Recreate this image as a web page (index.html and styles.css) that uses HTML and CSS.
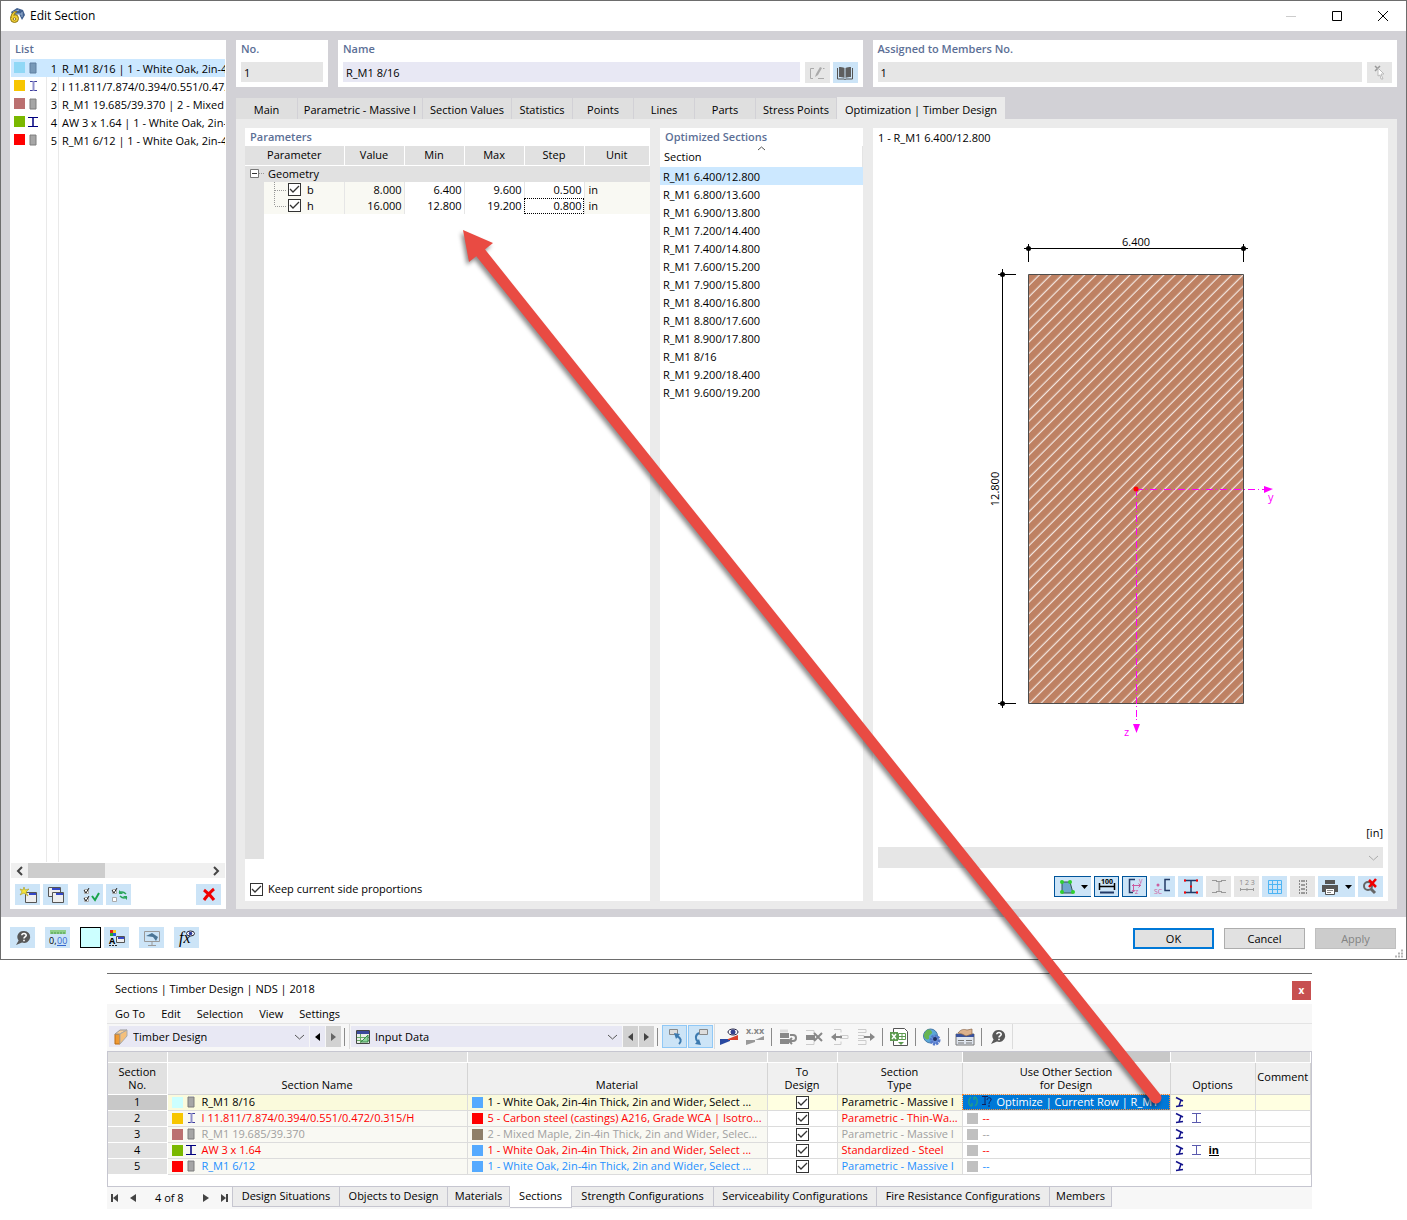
FILE: index.html
```html
<!DOCTYPE html>
<html lang="en">
<head>
<meta charset="utf-8">
<title>Edit Section</title>
<link rel="stylesheet" href="styles.css">
</head>
<body>
<svg class="defs" aria-hidden="true">
  <symbol id="massive" viewBox="0 0 8 12"><path d="M1 1h6v10H1z" fill="#a6a6a6" stroke="#7d7d7d"/><path d="M2 .5h5" stroke="#c4c4c4"/></symbol>
  <symbol id="massive-sel" viewBox="0 0 8 12"><path d="M1 1h6v10H1z" fill="#7899b8" stroke="#5f7fa0"/></symbol>
  <symbol id="ibeam" viewBox="0 0 10 12"><path d="M0 1.500h10M0 10.500h10" fill="none" stroke="#00007f"/><path d="M5 1v10" stroke="#00007f" stroke-width="1.500"/></symbol>
  <symbol id="ibeam-soft" viewBox="0 0 10 12"><path d="M2 1.500h7M2 10.500h7" stroke="#3c3c9c" fill="none"/><path d="M5.500 1v10" stroke="#9090cc" stroke-width="2"/></symbol>
  <symbol id="ibeam-thin" viewBox="0 0 10 12"><path d="M0 1.500h9M0 10.500h9M4.500 2v8" stroke="#5a5aae" fill="none"/></symbol>
  <symbol id="support" viewBox="0 0 10 12"><path d="m1 1.500 7 3.500M6 4 4 10M1 10.500l7-1" stroke="#14148c" stroke-width="1.500" fill="none"/></symbol>
  <symbol id="help" viewBox="0 0 16 16"><path d="M9 1a6 6 0 1 1-2 11.600L1 15l2.600-4.400A6 6 0 0 1 9 1z" fill="#585858"/><path d="M6.800 5.300C7 2.800 11.500 3 11.200 5.400 11 7 9 6.800 9 8.600M9 9.800v1.400" stroke="#fff" stroke-width="1.600" fill="none"/></symbol>
</svg>

<div class="screen">
  <section class="dialog" aria-label="Edit Section">
    <header class="titlebar">
      <svg width="16" height="16" viewBox="0 0 16 16"><path d="M2 4 8 0l6 2 2 5-3 5-3-6-6 2z" fill="#41608f"/><path d="m4 4 6-2M6 6l7 0M13 4l0 5" stroke="#9db4d4"/><circle cx="5.500" cy="10.500" r="4" fill="#f3cf32" stroke="#8d7718"/><path d="M2 10C2 6 4 3 8 3.500 6 5 5 6 5 8" fill="#f3cf32" stroke="#8d7718"/><circle cx="5.500" cy="11" r="1.300" fill="#fff" stroke="#8d7718"/></svg>
      <h1>Edit Section</h1>
      <div class="window-controls">
        <button aria-label="Minimize" disabled><svg width="12" height="12"><path d="M1 6.500h10" stroke="#ccc"/></svg></button>
        <button aria-label="Maximize"><svg width="12" height="12"><path d="M1.500 1.500h9v9h-9z" fill="none" stroke="#000"/></svg></button>
        <button aria-label="Close"><svg width="12" height="12"><path d="m1 1 10 10M11 1 1 11" stroke="#000"/></svg></button>
      </div>
    </header>

    <div class="workspace">
      <section class="panel list-panel">
        <h2>List</h2>
        <ul class="section-list">
          <li class="selected"><i class="swatch sky"></i><svg width="8" height="12"><use href="#massive-sel"/></svg><b>1</b><span>R_M1 8/16 | 1 - White Oak, 2in-4</span></li>
          <li><i class="swatch amber"></i><svg width="10" height="12"><use href="#ibeam-soft"/></svg><b>2</b><span>I 11.811/7.874/0.394/0.551/0.472</span></li>
          <li><i class="swatch rose"></i><svg width="8" height="12"><use href="#massive"/></svg><b>3</b><span>R_M1 19.685/39.370 | 2 - Mixed M</span></li>
          <li><i class="swatch green"></i><svg width="10" height="12"><use href="#ibeam"/></svg><b>4</b><span>AW 3 x 1.64 | 1 - White Oak, 2in-</span></li>
          <li><i class="swatch red"></i><svg width="8" height="12"><use href="#massive"/></svg><b>5</b><span>R_M1 6/12 | 1 - White Oak, 2in-4</span></li>
        </ul>
        <div class="scrollbar">
          <button aria-label="Scroll left"><svg width="7" height="8"><path d="M6 0 2 4l4 4" fill="none" stroke="#444" stroke-width="2"/></svg></button>
          <i class="thumb"></i>
          <button aria-label="Scroll right"><svg width="7" height="8"><path d="m1 0 4 4-4 4" fill="none" stroke="#444" stroke-width="2"/></svg></button>
        </div>
        <div class="icon-row list-tools">
          <button class="tool" aria-label="New"><svg width="18" height="16"><path d="M6.500 5.500h11v10h-11z" fill="#eee" stroke="#555"/><path d="M10 6h7v2h-7z" fill="#3448c8"/><path d="m5 0 1 3 4-1-3 3 2 4-4-3-4 2 2-3-2-3 3 1z" fill="#f5e43c" stroke="#a89a20" stroke-width=".6"/></svg></button>
          <button class="tool" aria-label="Copy"><svg width="18" height="16"><path d="M1.500.500h12v9h-12z" fill="#eee" stroke="#555"/><path d="M5 1h8v2H5z" fill="#3448c8"/><path d="M5.500 5.500h11v10h-11z" fill="#eee" stroke="#555"/><path d="M9 6h7v2H9z" fill="#3448c8"/></svg></button>
          <button class="tool gap-before" aria-label="Select all"><svg width="18" height="16"><path d="M2.500 2.500h4v4h-4zM2.500 10.500h4v4h-4z" fill="#fff" stroke="#aaa"/><path d="m2 3 2 3 3-5M2 11l2 3 3-5" stroke="#222" fill="none"/><path d="m10 9 3 4 4-7" fill="none" stroke="#19a34a" stroke-width="2"/></svg></button>
          <button class="tool" aria-label="Invert selection"><svg width="18" height="16"><path d="M2.500 2.500h4v4h-4zM2.500 10.500h4v4h-4z" fill="#fff" stroke="#aaa"/><path d="m2 3 2 3 3-5" stroke="#222" fill="none"/><path d="M9 6c3-2 5-1 7 1M17 10c-3 2-5 1-7-1" fill="none" stroke="#2aa55a" stroke-width="1.500"/><path d="M9 3v4h4zM17 13V9h-4z" fill="#2aa55a"/></svg></button>
          <button class="tool push" aria-label="Delete"><svg width="14" height="14"><path d="M2 2c4 3 7 6 10 10M12 1C8 4 5 8 2 12" stroke="#f00000" stroke-width="3" fill="none"/></svg></button>
        </div>
      </section>

      <div class="details">
        <div class="head-row">
          <section class="panel field-panel">
            <h2><label for="no">No.</label></h2>
            <input id="no" class="field" value="1" readonly>
          </section>
          <section class="panel field-panel">
            <h2><label for="name">Name</label></h2>
            <div class="field-line">
              <input id="name" class="field editable" value="R_M1 8/16">
              <button class="tool off" aria-label="Edit name" disabled><svg width="16" height="14"><path d="M5 2.500H1.500v10H4M9 12.500h6M14 2.500h1.500" fill="none" stroke="#aaa"/><path d="m6 11 1-3 4-7 2 1-4 7z" fill="#aaa"/></svg></button>
              <button class="tool" aria-label="Library"><svg width="16" height="14"><path d="M2 1c2 0 4 0 5.500 1v10C6 11 4 11 2 11zM14 1c-2 0-4 0-5.500 1v10c1.500-1 3.500-1 5.500-1z" fill="#5e5e5e"/><path d="M.5 2v11H7l1 .5 1-.5h6.500V2" fill="none" stroke="#555"/></svg></button>
            </div>
          </section>
          <section class="panel field-panel">
            <h2><label for="assigned">Assigned to Members No.</label></h2>
            <div class="field-line">
              <input id="assigned" class="field" value="1" readonly>
              <button class="tool off" aria-label="Pick members" disabled><svg width="14" height="18"><path d="m2 2 5 5M7 2 2 7" stroke="#999" stroke-width="1.500"/><path d="m5 4 6 6-3 0 2 5-2 0-1-4-2 1z" fill="#fff" stroke="#bbb"/></svg></button>
            </div>
          </section>
        </div>

        <nav class="tabs" aria-label="Section pages">
          <button class="w1">Main</button><button class="w2">Parametric - Massive I</button><button class="w3">Section Values</button><button>Statistics</button><button>Points</button><button>Lines</button><button>Parts</button><button class="w4">Stress Points</button><button class="w5 active">Optimization | Timber Design</button>
        </nav>

        <div class="page">
          <section class="panel params">
            <h2>Parameters</h2>
            <div class="param-area">
              <table class="param-table">
                <colgroup><col class="c-gutter"><col class="c-name"><col class="c-num"><col class="c-num"><col class="c-num"><col class="c-num"><col></colgroup>
                <thead><tr><th colspan="2">Parameter</th><th>Value</th><th>Min</th><th>Max</th><th>Step</th><th>Unit</th></tr></thead>
                <tbody>
                  <tr class="group"><td><svg width="17" height="16"><path d="M5.500 3.500h8v8h-8z" fill="#fff" stroke="#777"/><path d="M7 7.500h5" stroke="#333"/><path d="M14 7.500h5" stroke="#999" stroke-dasharray="1 1"/></svg></td><td colspan="6">Geometry</td></tr>
                  <tr><td></td><td class="leaf"><label><svg width="14" height="16"><path d="M.5 0v16M1 8.500h12" stroke="#999" stroke-dasharray="1 1"/></svg><input type="checkbox" checked>b</label></td><td class="tint">8.000</td><td>6.400</td><td>9.600</td><td>0.500</td><td class="unit">in</td></tr>
                  <tr><td></td><td class="leaf"><label><svg width="14" height="16"><path d="M.5 0v8M1 8.500h12" stroke="#999" stroke-dasharray="1 1"/></svg><input type="checkbox" checked>h</label></td><td class="tint">16.000</td><td>12.800</td><td>19.200</td><td class="focus">0.800</td><td class="unit">in</td></tr>
                </tbody>
              </table>
            </div>
            <label class="keep"><input type="checkbox" checked>Keep current side proportions</label>
          </section>

          <section class="panel optimized">
            <h2>Optimized Sections</h2>
            <div class="col-head"><svg width="9" height="5"><path d="m1 4 3.500-3L8 4" fill="none" stroke="#555"/></svg>Section</div>
            <ul>
              <li class="selected">R_M1 6.400/12.800</li><li>R_M1 6.800/13.600</li><li>R_M1 6.900/13.800</li><li>R_M1 7.200/14.400</li><li>R_M1 7.400/14.800</li><li>R_M1 7.600/15.200</li><li>R_M1 7.900/15.800</li><li>R_M1 8.400/16.800</li><li>R_M1 8.800/17.600</li><li>R_M1 8.900/17.800</li><li>R_M1 8/16</li><li>R_M1 9.200/18.400</li><li>R_M1 9.600/19.200</li>
            </ul>
          </section>

          <section class="panel preview">
            <p class="caption">1 - R_M1 6.400/12.800</p>
            <svg class="drawing" viewBox="878 147 505 677" role="img" aria-label="Cross-section">
              <defs><pattern id="hatch" width="8" height="8" patternUnits="userSpaceOnUse" patternTransform="rotate(45)"><path d="M1.300 0v8" stroke="#fff"/></pattern></defs>
              <path d="M1028.500 274.500h215v429h-215z" fill="#be8163"/>
              <path d="M1028.500 274.500h215v429h-215z" fill="url(#hatch)" stroke="#4d4d4d"/>
              <path d="M1024 248.500h224M1028.500 244v18M1243.500 244v18M1002.500 269v439M998 274.500h18M998 703.500h18" stroke="#000" fill="none"/>
              <g fill="#000"><circle cx="1028.500" cy="248.500" r="2.500"/><circle cx="1243.500" cy="248.500" r="2.500"/><circle cx="1002.500" cy="274.500" r="2.500"/><circle cx="1002.500" cy="703.500" r="2.500"/></g>
              <text x="1136" y="246" text-anchor="middle">6.400</text>
              <text transform="translate(999 489) rotate(-90)" text-anchor="middle">12.800</text>
              <path d="M1136.500 489v234" stroke="#f0f" stroke-dasharray="7 2 1 3"/>
              <path d="M1136 489.500h130" stroke="#f0f" stroke-dasharray="7 3 1 3"/>
              <path d="M1264 486l9 3-9 4zM1133 724h7l-3.500 9z" fill="#f0f"/>
              <circle cx="1136" cy="489" r="2.500" fill="#f00"/>
              <text class="axis" x="1268" y="501">y</text><text class="axis" x="1124" y="736">z</text>
            </svg>
            <p class="units">[in]</p>
            <select class="result-select" aria-label="Result" disabled><option></option></select>
            <div class="icon-row view-tools">
              <button class="tool split on-left" aria-label="Fill"><svg width="16" height="16"><path d="M3 3h8l3 11H3z" fill="#6ea6cc" stroke="#355"/><g fill="#2fd02f"><circle cx="3" cy="3" r="2"/><circle cx="11" cy="3" r="2"/><circle cx="14" cy="13" r="2"/><circle cx="3" cy="13" r="2"/></g></svg><svg width="7" height="4"><path d="M0 0h7L3.500 4z"/></svg></button>
              <button class="tool on" aria-label="Dimensions"><svg width="18" height="17"><path d="M1.500 5v7M16.500 5v7M1 8.500h16" stroke="#000" stroke-width="1.500"/><path d="M2 14.500h14" stroke="#223a66" stroke-width="2"/><text x="9" y="6" class="micro bold" text-anchor="middle">100</text></svg></button>
              <button class="tool on" aria-label="Axes"><svg width="18" height="17"><path d="M9 1.500H3.500v13H7" fill="none" stroke="#223a66" stroke-width="1.500"/><path d="M6 7.500h9M7.500 6v8M12.500 5.500l2 2-2 2M6 12l1.500 2L9 12" fill="none" stroke="#cc5d9f"/><text x="13" y="5" class="micro pink">y</text><text x="9" y="16" class="micro pink">z</text></svg></button>
              <button class="tool" aria-label="Shear center"><svg width="18" height="17"><path d="M16 1.500h-5v11h5" fill="none" stroke="#223a66" stroke-width="1.500"/><circle cx="4" cy="7" r="1.500" fill="#cc5d9f"/><text x="0" y="16" class="micro pink">SC</text></svg></button>
              <button class="tool" aria-label="Parts"><svg width="18" height="17"><path d="M2 2.500h14M2 14.500h14M9 3v11" fill="none" stroke="#223a66" stroke-width="1.500"/><path d="M2 2.500h2M14 2.500h2M2 14.500h2M14 14.500h2M8 8.500h2" stroke="#f00" stroke-width="2"/></svg></button>
              <button class="tool off" aria-label="Outline" disabled><svg width="18" height="17"><path d="M2 2.500h5M11 2.500h5M2 14.500h5M11 14.500h5M9 4v9M6 3.500h6M6 13.500h6" stroke="#999" fill="none"/></svg></button>
              <button class="tool off" aria-label="Numbering" disabled><svg width="18" height="17"><path d="M2 11.500h14M2.500 10v3M9 10v3M15.500 10v3" stroke="#999"/><text x="9" y="7" class="micro muted" text-anchor="middle">1 2 3</text></svg></button>
              <button class="tool" aria-label="Grid"><svg width="16" height="16"><path d="M1.500 1.500h13v13h-13zM5.500 1v14M10.500 1v14M1 5.500h14M1 10.500h14" fill="none" stroke="#4cb4f4"/></svg></button>
              <button class="tool off" aria-label="Stress points" disabled><svg width="16" height="16"><path d="M4.500 1v14M11.500 1v14" stroke="#888" stroke-dasharray="2 1"/><path d="M8 1v14" stroke="#999" stroke-width="4" stroke-dasharray="2 2"/></svg></button>
              <button class="tool split" aria-label="Print"><svg width="18" height="16"><path d="M4 1h10v4H4zM1 6h16v7H1z" fill="#555"/><path d="M4.500 9.500h9v6h-9z" fill="#fff" stroke="#555"/><path d="M6 11.500h6M6 13.500h4" stroke="#888"/></svg><svg width="7" height="4"><path d="M0 0h7L3.500 4z"/></svg></button>
              <button class="tool" aria-label="Reset zoom"><svg width="17" height="17"><circle cx="6" cy="8" r="4" fill="none" stroke="#666" stroke-width="2"/><path d="m9 11 4 4" stroke="#666" stroke-width="3"/><path d="m7 2 7 7M14 1 7 9" stroke="#f00000" stroke-width="2.500"/></svg></button>
            </div>
          </section>
        </div>
      </div>
    </div>

    <footer class="dialog-footer">
      <button class="tool" aria-label="Help"><svg width="16" height="16"><use href="#help"/></svg></button>
      <button class="tool" aria-label="Units"><svg width="18" height="18"><path d="M1 1h16v4H1z" fill="#8fd08a"/><path d="M3 3v2M6 3v2M9 3v2M12 3v2M15 3v2" stroke="#4d9a4d"/><text x="0" y="15" class="small">0,</text><text x="8" y="15" class="small blue-text">00</text><path d="M8 16.500h9" stroke="#36c"/></svg></button>
      <button class="color-box" aria-label="Color"></button>
      <button class="tool tight" aria-label="Display"><svg width="18" height="18"><path d="M2 1h3v3H2z" fill="#e02020"/><path d="M5 1h3v3H5z" fill="#f2d32b"/><path d="M2 4h3v3H2z" fill="#26a82e"/><path d="M5 4h3v3H5z" fill="#2858e0"/><text x="1" y="15" class="small bold">A</text><path d="M8.500 7.500h8v6h-8z" fill="#eee" stroke="#555"/><path d="M10 8h6v2h-6z" fill="#3448c8"/><path d="M1 16.500h9" stroke="#222" stroke-dasharray="2 1"/></svg></button>
      <button class="tool" aria-label="Screen"><svg width="18" height="18"><path d="M1.500 2.500h15v10h-15zM9 13v3M5 16.500h8" fill="none" stroke="#999"/><path d="m3 7 6-3 6 4-2 4-3-4z" fill="#4b7596"/></svg></button>
      <button class="tool" aria-label="Formula"><svg width="18" height="18"><text x="1" y="14" class="formula">fx</text><ellipse cx="12.500" cy="4.500" rx="4" ry="2.500" fill="#fff" stroke="#223"/><circle cx="12.500" cy="4.500" r="1.800" fill="#2c3a9c"/></svg></button>
      <div class="actions">
        <button class="primary">OK</button><button>Cancel</button><button disabled>Apply</button>
      </div>
      <svg class="grip" width="9" height="9"><path d="M6 1.500h2M3 4.500h2M6 4.500h2M0 7.500h2M3 7.500h2M6 7.500h2" stroke="#b4b4b4" stroke-width="2"/></svg>
    </footer>
  </section>

  <section class="sheet" aria-label="Sections">
    <header class="sheet-title"><h1>Sections | Timber Design | NDS | 2018</h1><button aria-label="Close">x</button></header>
    <nav class="menu"><a href="#">Go To</a><a href="#">Edit</a><a href="#">Selection</a><a href="#">View</a><a href="#">Settings</a></nav>
    <div class="toolbar">
      <div class="combo addon">
        <svg width="14" height="16"><path d="M1 5h5v10H1z" fill="#f09a32" stroke="#b96b12"/><path d="m1 5 5-4h7L6 5z" fill="#f7cf9a" stroke="#999"/><path d="m6 5 7-4v6l-7 8z" fill="#f4c07c" stroke="#aaa"/></svg>
        <select aria-label="Add-on"><option>Timber Design</option></select>
      </div>
      <button class="step" aria-label="Previous add-on"><svg width="5" height="8"><path d="M5 0v8L0 4z"/></svg></button>
      <button class="step off" aria-label="Next add-on"><svg width="5" height="8"><path d="M0 0v8l5-4z" fill="#666"/></svg></button>
      <i class="sep"></i><i class="edge"></i>
      <div class="combo data">
        <svg width="14" height="14"><path d="M.5.500h13v13H.5z" fill="#e8efe8" stroke="#444"/><path d="M1 1h12v3H1z" fill="#3b4a9c"/><path d="M1 7.500h12M1 10.500h12M4.500 4v9" stroke="#6a6"/><path d="m5 12 7-7v7z" fill="#8bd39a" stroke="#3a8a4c"/></svg>
        <select aria-label="Data"><option>Input Data</option></select>
      </div>
      <button class="step off" aria-label="Previous data"><svg width="5" height="8"><path d="M5 0v8L0 4z" fill="#444"/></svg></button>
      <button class="step off" aria-label="Next data"><svg width="5" height="8"><path d="M0 0v8l5-4z" fill="#444"/></svg></button>
      <i class="sep"></i>
      <button class="toggle" aria-label="Sync from model"><svg width="18" height="18"><path d="M3.500 1.500h8v5h-8z" fill="#ddd" stroke="#888"/><path d="M13 16c3-3 2-6-2-8" fill="none" stroke="#3c7ab0" stroke-width="2"/><path d="m8 5 6 1-4 5z" fill="#3c7ab0"/></svg></button>
      <button class="toggle" aria-label="Sync to model"><svg width="18" height="18"><path d="M7.500 1.500h8v5h-8z" fill="#ddd" stroke="#888"/><path d="M7 5c-4 2-4 6-1 9" fill="none" stroke="#3c7ab0" stroke-width="2"/><path d="m9 17-6-1 4-5z" fill="#3c7ab0"/></svg></button>
      <i class="edge"></i>
      <button class="plain" aria-label="Show values"><svg width="20" height="18"><path d="M1 11h10v2L1 17z" fill="#2848a0"/><path d="m9 11 10-4v5H9z" fill="#d8402c"/><ellipse cx="14" cy="4" rx="5" ry="3" fill="#fff" stroke="#224"/><circle cx="14" cy="4" r="2.500" fill="#33418f"/></svg></button>
      <button class="plain" aria-label="Decimals"><svg width="20" height="18"><text x="10" y="6" class="small muted bold" text-anchor="middle">x.xx</text><path d="M1 12h9v2l-9 3zM10 12l9-4v4z" fill="#999"/></svg></button>
      <i class="sep"></i>
      <button class="plain" aria-label="Insert row"><svg width="20" height="18"><path d="M2 1.500h8v3H2z" fill="#ddd"/><path d="M2 5h9v5H2zM2 11h9v5H2z" fill="#888"/><path d="M12 7h3c4 0 4 6 0 6h-3M14 10l-3 3 3 3" fill="none" stroke="#888" stroke-width="2"/></svg></button>
      <button class="plain" aria-label="Delete row"><svg width="20" height="18"><path d="M2 2.500h8v3M2 16.500h8v-3" fill="none" stroke="#ccc"/><path d="M2 7h9v5H2z" fill="#888"/><path d="m10 5 8 8M18 5l-8 8" stroke="#888" stroke-width="2"/></svg></button>
      <button class="plain" aria-label="Shift left"><svg width="20" height="18"><path d="M4 1.500h7v3M4 16.500h7v-3M10 7.500h8v3h-8" fill="none" stroke="#ccc"/><path d="M4 9h8" stroke="#888" stroke-width="2"/><path d="M6 5v8L1 9z" fill="#888"/></svg></button>
      <button class="plain" aria-label="Shift right"><svg width="20" height="18"><path d="M2 1.500h8v3H2M2 16.500h8v-4H2M2 7.500h6v3H2" fill="none" stroke="#ccc"/><path d="M8 9h8" stroke="#888" stroke-width="2"/><path d="M14 5v8l5-4z" fill="#888"/></svg></button>
      <i class="sep"></i>
      <button class="plain" aria-label="Export to Excel"><svg width="20" height="18"><path d="M4.500.500h11l3 3v14h-14z" fill="#fff" stroke="#555"/><path d="M1 4h8v9H1z" fill="#5d9a50"/><path d="m3 6 4 5M7 6l-4 5" stroke="#fff" stroke-width="1.500"/><path d="M9.500 5.500h7v6h-7zM13 5v7M9 8.500h8" fill="none" stroke="#5d9a50"/><path d="M9 14h6l-3 3z" fill="#5d9a50"/></svg></button>
      <i class="sep"></i>
      <button class="plain" aria-label="Settings"><svg width="20" height="18"><circle cx="8.500" cy="8" r="7" fill="#5ba7d8" stroke="#4679a8"/><path d="M4 3c3-3 5-1 6 1s-4 3-3 5-2 4-4 1-1-4 1-7z" fill="#67b552"/><circle cx="13" cy="12" r="4" fill="#6f93dc" stroke="#5277c8" stroke-width="3" stroke-dasharray="2 1"/><circle cx="13" cy="11" r="2" fill="#1e3060"/></svg></button>
      <i class="sep"></i>
      <button class="plain" aria-label="Options"><svg width="20" height="18"><path d="M1 6h18v11H1z" fill="#dfe5ee" stroke="#777"/><path d="M1 6h18v3H1z" fill="#39519b"/><path d="M3 5c3-4 6-4 9-3l5-1v5l-6 2-4-2z" fill="#ddb18c" stroke="#8a6549" stroke-width=".7"/><path d="M3 12.500h6M11 12.500h6M3 15h6M11 15h6" stroke="#777"/></svg></button>
      <i class="sep"></i>
      <button class="plain" aria-label="Help"><svg width="16" height="16"><use href="#help"/></svg></button>
      <i class="edge"></i>
    </div>

    <div class="grid-box">
      <table class="grid">
        <colgroup><col class="g-no"><col class="g-name"><col class="g-name"><col class="g-do"><col class="g-type"><col class="g-other"><col class="g-opt"><col></colgroup>
        <thead>
          <tr class="band"><td></td><td></td><td></td><td></td><td></td><td class="hot"></td><td></td><td></td></tr>
          <tr><th class="rowhead">Section<br>No.</th><th>Section Name</th><th>Material</th><th>To<br>Design</th><th>Section<br>Type</th><th>Use Other Section<br>for Design</th><th>Options</th><th class="mid">Comment</th></tr>
        </thead>
        <tbody>
          <tr class="current"><th>1</th>
            <td><div><i class="swatch cyan"></i><svg width="10" height="12"><use href="#massive"/></svg>R_M1 8/16</div></td>
            <td><div><i class="swatch blue"></i>1 - White Oak, 2in-4in Thick, 2in and Wider, Select ...</div></td>
            <td class="check"><input type="checkbox" aria-label="Design section 1" checked></td><td><div>Parametric - Massive I</div></td>
            <td class="picked"><div><svg width="25" height="14"><path d="M4 2C0 6 2 11 5 11M5 11V8M8 11c4-3 2-9-1-9M7 2v3" stroke="#1f9a90" fill="none" stroke-width="1.500"/><path d="M15 1.500h6M15 9.500h4M18 2v7" stroke="#10205c"/><path d="M20 5c0-3 5-3 4 0-1 2-2 2-2 4M22 10v2" stroke="#10205c" fill="none"/></svg>Optimize | Current Row | R_M1</div></td>
            <td><div><svg width="10" height="12"><use href="#support"/></svg></div></td><td></td></tr>
          <tr class="t-red"><th>2</th>
            <td><div><i class="swatch amber"></i><svg width="10" height="12"><use href="#ibeam-soft"/></svg>I 11.811/7.874/0.394/0.551/0.472/0.315/H</div></td>
            <td><div><i class="swatch red"></i>5 - Carbon steel (castings) A216, Grade WCA | Isotro...</div></td>
            <td class="check"><input type="checkbox" aria-label="Design section 2" checked></td><td><div>Parametric - Thin-Wa...</div></td>
            <td><div><i class="swatch gray"></i>--</div></td>
            <td><div><svg width="10" height="12"><use href="#support"/></svg><svg width="10" height="12"><use href="#ibeam-thin"/></svg></div></td><td></td></tr>
          <tr class="t-gray"><th>3</th>
            <td><div><i class="swatch rose"></i><svg width="10" height="12"><use href="#massive"/></svg>R_M1 19.685/39.370</div></td>
            <td><div><i class="swatch brown"></i>2 - Mixed Maple, 2in-4in Thick, 2in and Wider, Selec...</div></td>
            <td class="check"><input type="checkbox" aria-label="Design section 3" checked></td><td><div>Parametric - Massive I</div></td>
            <td><div><i class="swatch gray"></i>--</div></td>
            <td><div><svg width="10" height="12"><use href="#support"/></svg></div></td><td></td></tr>
          <tr class="t-red"><th>4</th>
            <td><div><i class="swatch green"></i><svg width="10" height="12"><use href="#ibeam"/></svg>AW 3 x 1.64</div></td>
            <td><div><i class="swatch blue"></i>1 - White Oak, 2in-4in Thick, 2in and Wider, Select ...</div></td>
            <td class="check"><input type="checkbox" aria-label="Design section 4" checked></td><td><div>Standardized - Steel</div></td>
            <td><div><i class="swatch gray"></i>--</div></td>
            <td><div><svg width="10" height="12"><use href="#support"/></svg><svg width="10" height="12"><use href="#ibeam-thin"/></svg><span class="inch">in</span></div></td><td></td></tr>
          <tr class="t-blue"><th>5</th>
            <td><div><i class="swatch red"></i><svg width="10" height="12"><use href="#massive"/></svg>R_M1 6/12</div></td>
            <td><div><i class="swatch blue"></i>1 - White Oak, 2in-4in Thick, 2in and Wider, Select ...</div></td>
            <td class="check"><input type="checkbox" aria-label="Design section 5" checked></td><td><div>Parametric - Massive I</div></td>
            <td><div><i class="swatch gray"></i>--</div></td>
            <td><div><svg width="10" height="12"><use href="#support"/></svg></div></td><td></td></tr>
        </tbody>
      </table>
    </div>

    <nav class="sheet-tabs" aria-label="Tables">
      <div class="pager">
        <button aria-label="First"><svg width="8" height="8"><path d="M1 0v8" stroke="#444" stroke-width="2"/><path d="M7 0v8L2 4z" fill="#444"/></svg></button>
        <button aria-label="Previous"><svg width="6" height="8"><path d="M6 0v8L0 4z" fill="#444"/></svg></button>
        <span>4 of 8</span>
        <button aria-label="Next"><svg width="6" height="8"><path d="M0 0v8l6-4z" fill="#444"/></svg></button>
        <button aria-label="Last"><svg width="8" height="8"><path d="M7 0v8" stroke="#444" stroke-width="2"/><path d="M1 0v8l5-4z" fill="#444"/></svg></button>
      </div>
      <button class="s2">Design Situations</button><button class="s2">Objects to Design</button><button class="s1">Materials</button><button class="s1 active">Sections</button><button class="s3">Strength Configurations</button><button class="s4">Serviceability Configurations</button><button class="s5">Fire Resistance Configurations</button><button class="s1">Members</button>
    </nav>
  </section>

  <svg class="callout" viewBox="0 0 1407 1220" aria-hidden="true">
    <g fill="#e94b43"><path d="M480 252 1156 1098" stroke="#e94b43" stroke-width="11" stroke-linecap="round"/><path d="m463 230 30 13-24 19z"/></g>
  </svg>
</div>
</body>
</html>
```
FILE: styles.css
```css
* { box-sizing: border-box; }
body {
  margin: 0;
  background: #fff;
  color: #000;
  font: 11px/16px "Open Sans", "Noto Sans", sans-serif;
}
h1, h2, p, ul { margin: 0; padding: 0; font-size: inherit; }
ul { list-style: none; }
button, input, select { font: inherit; color: inherit; margin: 0; border-radius: 0; }
button { padding: 0; border: 0; background: none; white-space: nowrap; }
svg { display: block; flex: none; overflow: visible; }
.defs { position: absolute; width: 0; height: 0; }
.screen { position: relative; min-width: 1300px; padding-bottom: 11px; }

input[type="checkbox"] {
  appearance: none;
  flex: none;
  width: 13px;
  height: 13px;
  border: 1px solid #333;
  background: #fff url("data:image/svg+xml,%3Csvg xmlns='http://www.w3.org/2000/svg' viewBox='0 0 11 11'%3E%3Cpath d='m1 5 3 3 6-6' fill='none' stroke='%23333' stroke-width='1.300'/%3E%3C/svg%3E");
}
select {
  appearance: none;
  border: 0;
  background: url("data:image/svg+xml,%3Csvg xmlns='http://www.w3.org/2000/svg' width='9' height='6'%3E%3Cpath d='m0 1 4.500 4L9 1' fill='none' stroke='%23555'/%3E%3C/svg%3E") no-repeat right 5px center;
}
select:disabled {
  background-image: url("data:image/svg+xml,%3Csvg xmlns='http://www.w3.org/2000/svg' width='9' height='6'%3E%3Cpath d='m0 1 4.500 4L9 1' fill='none' stroke='%23aaa'/%3E%3C/svg%3E");
}

.swatch { flex: none; width: 11px; height: 11px; }
.sky { background: #90d8f6; }
.cyan { background: #ccffff; }
.amber { background: #f7c600; }
.rose { background: #bb7070; }
.green { background: #7ab800; }
.red { background: #f00; }
.blue { background: #55aaff; }
.brown { background: #8f7f69; }
.gray { background: #c0c0c0; }

/* Dialog frame */
.dialog { border: 1px solid #6d6d6d; }
.titlebar { display: flex; align-items: center; height: 30px; padding-left: 8px; gap: 5px; }
.titlebar h1 { font-size: 12px; font-weight: 400; }
.window-controls { display: flex; margin-left: auto; }
.window-controls button { display: grid; place-items: center; width: 46px; height: 30px; }
.workspace {
  display: flex;
  gap: 10px;
  padding: 9px 9px 8px;
  background: #d2d1d6;
}
.panel { background: #fff; }
.panel h2 { height: 18px; padding-left: 5px; color: #5c6f96; font-weight: 600; line-height: 18px; }

.tool {
  display: flex;
  align-items: center;
  justify-content: center;
  flex: none;
  width: 25px;
  height: 21px;
  background: #cce4f7;
}
.tool.off { background: #e6e6e6; }
.tool.on { border: 1px solid #00549a; }
.icon-row { display: flex; gap: 3px; }

/* Section list */
.list-panel { display: flex; flex-direction: column; width: 216px; flex: none; padding: 0 1px 4px; }
.list-panel h2 { padding-left: 4px; }
.section-list {
  flex: 1;
  margin-top: 1px;
  background: linear-gradient(to right, transparent 35px, #e9e9e9 35px 36px, transparent 36px 47px, #e9e9e9 47px 48px, transparent 48px);
}
.section-list li { display: grid; grid-template-columns: 11px 16px 16px minmax(0, 1fr); align-items: center; height: 18px; padding-left: 3px; }
.section-list li svg { justify-self: center; }
.section-list .swatch { align-self: start; margin-top: 3px; }
.section-list b, .section-list span { padding-top: 2px; line-height: 16px; }
.section-list b { font-weight: 400; text-align: right; }
.section-list span { padding-left: 5px; overflow: hidden; white-space: nowrap; }
.selected { background: #cce8ff; }
.scrollbar { display: flex; align-items: stretch; height: 15px; margin: 1px 0 6px; background: #f0f0f0; }
.scrollbar button { display: grid; place-items: center; width: 17px; }
.scrollbar .thumb { width: 77px; margin-right: auto; background: #cdcdcd; }
.list-tools { padding: 0 4px; }
.gap-before { margin-left: 7px; }
.push { margin-left: auto; }

/* Header fields */
.details { flex: 1; min-width: 0; }
.head-row { display: grid; grid-template-columns: 92px 1fr 1fr; gap: 10px; }
.field-panel { padding: 0 5px 4px; }
.panel.field-panel h2 { padding-left: 0; }
.field {
  width: 100%;
  min-width: 0;
  height: 20px;
  margin-top: 4px;
  padding: 1px 3px 0;
  border: 0;
  background: #e6e6e6;
}
.field.editable { background: #e8e8f4; }
.field-line { display: flex; gap: 3px; }
.field-line .field { margin-right: 2px; }
.field-line .tool { margin-top: 4px; }

/* Page tabs */
.tabs { display: flex; align-items: flex-end; margin-top: 10px; padding-right: 2px; }
.tabs button { width: 61px; height: 21px; border-right: 1px solid #d2d1d6; background: #dfdfdf; padding-top: 3px; }
.tabs .w1 { width: 62px; }
.tabs .w2 { width: 125px; }
.tabs .w3 { width: 89px; }
.tabs .w4 { width: 81px; }
.tabs .w5 { width: 168px; }
.tabs .active { height: 22px; border: 0; background: #ebebeb; }
.page {
  display: grid;
  grid-template-columns: 405fr 203fr 515fr;
  gap: 10px;
  padding: 9px 9px 8px;
  background: #ebebeb;
}

/* Parameters */
.params { display: flex; flex-direction: column; }
.param-area { flex: 1; background: linear-gradient(to right, #e1e1e1 19px, transparent 19px); }
.param-table { width: 100%; table-layout: fixed; border-collapse: collapse; }
.c-gutter { width: 19px; }
.c-name { width: 80px; }
.c-num { width: 60px; }
.param-table th { height: 19px; padding: 0; border-right: 1px solid #fff; border-bottom: 1px solid #fff; background: #e1e1e1; font-weight: 400; }
.param-table td { height: 16px; padding: 0 2px; border-right: 1px solid #e6e6e6; text-align: right; line-height: 15px; }
.param-table td:first-child, .param-table td:last-child { border: 0; }
.param-table td:first-child { padding: 0; }
.param-table .group td { background: #e1e1e1; text-align: left; }
.param-table .group td + td { padding-left: 4px; }
.param-table .leaf, .param-table .tint, .param-table .unit { background: #f9f9f3; }
.param-table .leaf { padding: 0 0 0 10px; }
.leaf label { display: flex; align-items: center; height: 15px; overflow: hidden; }
.leaf input { margin-right: 6px; }
.param-table .unit { padding-left: 4px; text-align: left; }
.param-table .focus { outline: 1px dotted #000; outline-offset: -1px; }
.keep { display: flex; align-items: center; gap: 5px; height: 16px; margin: 22px 0 4px 5px; }

/* Optimized sections */
.col-head { position: relative; height: 21px; padding: 3px 4px 0; border-right: 1px solid #e4e4e4; }
.col-head svg { position: absolute; top: 0; left: 50%; margin-left: -4px; }
.optimized li { height: 18px; padding: 2px 3px 0; }

/* Preview */
.preview { padding: 0 5px 4px; }
.caption { height: 19px; padding-top: 2px; }
.drawing { width: 100%; height: auto; font-size: 11px; }
.units { height: 18px; text-align: right; line-height: 18px; }
.result-select { display: block; width: 100%; height: 21px; margin: 5px 0 8px; background-color: #e6e6e6; opacity: 1; }
.view-tools { justify-content: flex-end; }
.tool.split { width: 37px; gap: 6px; }
.on-left { border: 1px solid #00549a; border-right: 0; }
.axis { fill: #f0f; }
.micro { font-size: 7px; }
.small { font-size: 9px; }
.bold { font-weight: 700; }
.pink { fill: #cc5d9f; }
.muted { fill: #888; }
.blue-text { fill: #3366cc; }
.formula { font: italic 400 16px "Liberation Serif", serif; }

/* Dialog footer */
.dialog-footer { position: relative; display: flex; align-items: center; gap: 10px; height: 42px; padding: 0 10px 0 9px; }
.dialog-footer > .tool, .color-box { margin-bottom: 1px; }
.color-box { width: 21px; height: 21px; border: 1px solid #000; background: #ccffff; }
.dialog-footer .tight { margin-left: -7px; }
.actions { display: flex; gap: 10px; margin-left: auto; }
.actions button { width: 81px; height: 21px; padding-top: 1px; border: 1px solid #adadad; background: #e1e1e1; }
.actions .primary { border: 2px solid #0078d7; }
.actions button:disabled { border-color: #bfbfbf; background: #ccc; color: #838383; }
.grip { position: absolute; right: 2px; bottom: 1px; }

/* Table window */
.sheet { margin: 13px 95px 0 107px; border-top: 1px solid #6d6d6d; }
.sheet-title { display: flex; align-items: center; height: 30px; padding: 0 1px 0 8px; }
.sheet-title h1 { font-weight: 400; }
.sheet-title button { width: 19px; height: 19px; margin: 2px 0 0 auto; background: #c75050; color: #fff; font-size: 10px; font-weight: 700; line-height: 16px; }
.menu { display: flex; gap: 16px; height: 19px; padding: 2px 8px; background: #f7f7f7; }
.menu a { color: inherit; text-decoration: none; }
.toolbar { display: flex; align-items: center; height: 28px; padding: 0 0 2px 2px; border-top: 1px solid #e4e4e4; background: #f7f7f7; }
.combo { display: flex; align-items: center; height: 21px; padding-left: 5px; gap: 5px; background: #e8e8f4; }
.addon { width: 200px; }
.data { width: 271px; }
.combo select { flex: 1; height: 21px; }
.step { display: grid; place-items: center; width: 15px; height: 21px; margin-left: 1px; background: #e8e8f4; }
.step.off { background: #d2d2d2; }
.sep { width: 1px; height: 18px; margin: 0 3px; background: #8a8a8a; }
.edge { width: 1px; height: 25px; margin: 0 1px; background: #dcdcdc; }
.toggle { display: grid; place-items: center; width: 25px; height: 23px; margin-left: 1px; border: 1px solid #90c8f6; background: #cce4f7; }
.plain { display: grid; place-items: center; width: 26px; height: 23px; }

.grid-box { padding-bottom: 11px; border: 1px solid #c6c6d0; background: #fff; }
.grid { width: 100%; table-layout: fixed; border-collapse: collapse; }
.g-no { width: 59px; }
.g-name { width: 300px; }
.g-do { width: 70px; }
.g-type { width: 125px; }
.g-other { width: 208px; }
.g-opt { width: 85px; }
.grid .band td { height: 10px; border-bottom: 1px solid #fff; border-right: 1px solid #fff; background: #e1e1e1; }
.grid .band .hot { background: #c8c8c8; }
.grid th { padding: 0; border-right: 1px solid #d4d4d4; border-bottom: 1px solid #d4d4d4; background: #f0f0f0; font-weight: 400; line-height: 13px; }
.grid thead th { height: 32px; padding-bottom: 3px; vertical-align: bottom; }
.grid thead .mid { vertical-align: middle; }
.grid .rowhead, .grid tbody th { border-color: #fff; background: #e1e1e1; }
.grid tbody th { padding-bottom: 1px; }
.grid tbody .current th { background: #c8c8c8; }
.grid tbody td { height: 16px; padding: 0; border-right: 1px solid #dcdcdc; border-bottom: 1px solid #dcdcdc; }
.grid td div { display: flex; align-items: center; gap: 5px; height: 15px; padding-left: 4px; overflow: hidden; white-space: nowrap; }
.grid td div svg + svg { margin-left: 2px; }
.grid td:nth-child(2) svg { margin: 0 1px 0 -2px; }
.grid tbody td:nth-child(2), .grid tbody td:nth-child(3), .grid tbody td:nth-child(5) { background: #f9f9f3; }
.grid tbody .current td { background: #ffffe1; }
.grid tbody .current td:nth-child(2), .grid tbody .current td:nth-child(3), .grid tbody .current td:nth-child(5) { background: #fafadc; }
.grid tbody .current .picked { background: #0078d7; color: #fff; outline: 1px dotted #ff8728; outline-offset: -1px; }
.grid .check input { display: block; margin: 0 auto; }
.t-red { color: #f00; }
.t-gray { color: #a0a0a0; }
.t-blue { color: #1e90ff; }
.t-red th, .t-gray th, .t-blue th { color: #000; }
.inch { margin-left: 2px; border-bottom: 1px solid #000; color: #000; font-weight: 700; line-height: 10px; }

.sheet-tabs { display: flex; align-items: flex-start; height: 22px; background: #f7f7f7; }
.pager { display: flex; align-items: center; gap: 11px; width: 125px; height: 22px; padding: 0 4px; }
.pager span { margin: 0 8px; }
.sheet-tabs > button { height: 20px; border: 1px solid #c6c6d0; border-width: 0 1px 1px 0; background: #ececec; }
.sheet-tabs .s1 { width: 62px; }
.sheet-tabs .s2 { width: 108px; }
.sheet-tabs .s3 { width: 142px; }
.sheet-tabs .s4 { width: 163px; }
.sheet-tabs .s5 { width: 173px; }
.sheet-tabs .s2:first-of-type { border-left-width: 1px; }
.sheet-tabs > .active { height: 22px; margin-top: -1px; background: #fff; }

/* Arrow that lies over both windows */
.callout { position: absolute; top: 0; left: 0; width: 1407px; height: 1220px; pointer-events: none; filter: drop-shadow(-2px 3px 2px rgba(0, 0, 0, .45)); }
```
